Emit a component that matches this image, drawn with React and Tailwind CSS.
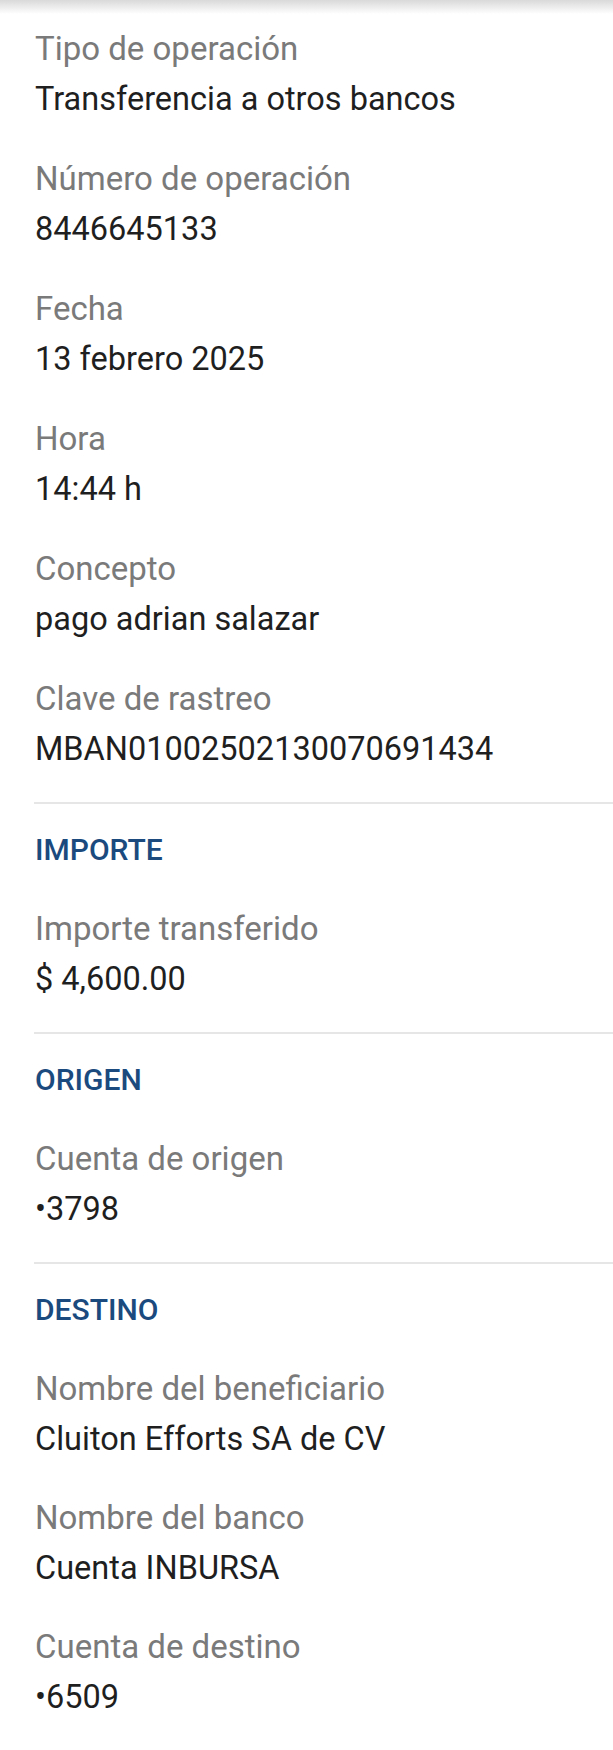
const general = [
  { label: "Tipo de operación", value: "Transferencia a otros bancos" },
  { label: "Número de operación", value: "8446645133" },
  { label: "Fecha", value: "13 febrero 2025" },
  { label: "Hora", value: "14:44 h" },
  { label: "Concepto", value: "pago adrian salazar" },
  { label: "Clave de rastreo", value: "MBAN01002502130070691434" },
];

const sections = [
  {
    title: "IMPORTE",
    rows: [{ label: "Importe transferido", value: "$ 4,600.00" }],
  },
  {
    title: "ORIGEN",
    rows: [{ label: "Cuenta de origen", value: "•3798" }],
  },
  {
    title: "DESTINO",
    rows: [
      { label: "Nombre del beneficiario", value: "Cluiton Efforts SA de CV" },
      { label: "Nombre del banco", value: "Cuenta INBURSA" },
      { label: "Cuenta de destino", value: "•6509" },
    ],
  },
];

function Row({ label, value }) {
  return (
    <div className="flex flex-col gap-[10px]">
      <div className="text-[33px] leading-[40px] text-[#7a7a7a]">{label}</div>
      <div className="text-[32.5px] leading-[40px] text-[#1f1f1f]">{value}</div>
    </div>
  );
}

export default function App() {
  return (
    <div
      className="relative min-h-[1750px] w-full bg-white"
      style={{ fontFamily: "Roboto, 'Noto Sans', sans-serif" }}
    >
      <div className="absolute inset-x-0 top-0 h-[14px] bg-gradient-to-b from-[#d9d9d9] to-white" />

      <div className="flex flex-col gap-[40px] pl-[35px] pt-[29px]">
        {general.map((r, i) => (
          <Row key={i} {...r} />
        ))}
      </div>

      {sections.map((s) => (
        <div key={s.title}>
          <div className="ml-[34px] mt-[33px] mb-[26px] border-t-2 border-[#e6e6e6]" />
          <div className="flex flex-col gap-[39px] pl-[35px]">
            <div className="text-[30px] leading-[40px] font-medium text-[#1a4a7e]">
              {s.title}
            </div>
            {s.rows.map((r, i) => (
              <Row key={i} {...r} />
            ))}
          </div>
        </div>
      ))}
    </div>
  );
}
